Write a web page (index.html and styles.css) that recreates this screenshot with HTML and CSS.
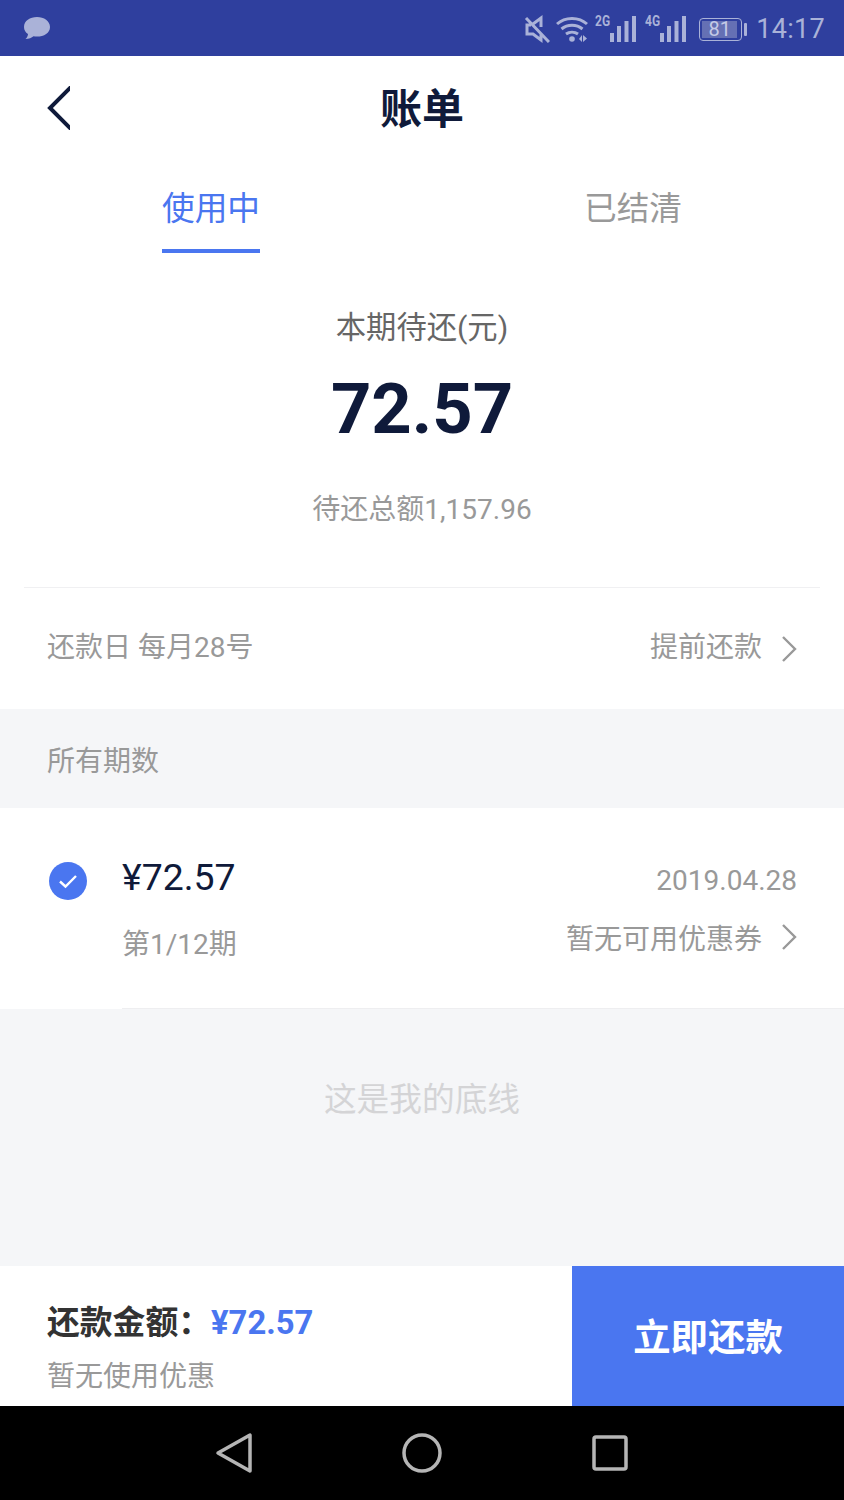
FILE: index.html
```html
<!DOCTYPE html>
<html lang="zh-CN">
<head>
<meta charset="utf-8">
<title>账单</title>
<link rel="stylesheet" href="styles.css">
</head>
<body>
<div class="app">
  <div class="status">
    <svg class="msg" width="30" height="28" viewBox="0 0 30 28"><path d="M15 3C8 3 2 6.800 2 13c0 3 1.500 5.500 4 7-.2 2-1 3.800-2.500 5 3.500 0 6.200-1.200 8-2.700 1.100.2 2.300.3 3.500.3 7 0 13-3.600 13-9.600S22 3 15 3z"/></svg>
    <div class="status-right">
      <svg class="mute" width="26" height="28" viewBox="0 0 26 28"><path class="line" d="M9 9l8-6v9M17 19v6l-8-6H3V10h4M2 3l23 24"/></svg>
      <svg class="wifi" width="32" height="28" viewBox="0 0 32 28"><path class="line" d="M1 9c8-7.500 22-7.500 30 0M5.500 14c6-5 15-5 21 0M10 19c3.500-2.500 8.500-2.500 12 0"/><circle cx="16" cy="24" r="2.800"/><path d="M23 24l3-4v7zM27 20l4 3.500-4 3.500z"/></svg>
      <span class="sig"><span class="gen">2G</span><svg width="28" height="28" viewBox="0 0 28 28"><path d="M1 18h4v9H1zM8 11h4v16H8zM15.500 6h4v21h-4zM23 1h4v26h-4z"/></svg></span>
      <span class="sig sig-last"><span class="gen">4G</span><svg width="28" height="28" viewBox="0 0 28 28"><path d="M1 18h4v9H1zM8 11h4v16H8zM15.500 6h4v21h-4zM23 1h4v26h-4z"/></svg></span>
      <span class="battery"><span class="batt-body"><span class="batt-fill">81</span></span><span class="batt-tip"></span></span>
      <span class="time">14:17</span>
    </div>
  </div>

  <header class="title-bar">
    <svg class="back" width="23" height="44" viewBox="0 0 23 44"><path d="M24 1L3 22l21 21"/></svg>
    <h1>账单</h1>
  </header>

  <nav class="tabs">
    <div class="tab active"><span>使用中</span></div>
    <div class="tab"><span>已结清</span></div>
  </nav>

  <section class="summary">
    <div class="sum-label">本期待还(元)</div>
    <div class="sum-value">72.57</div>
    <div class="sum-total">待还总额1,157.96</div>
  </section>

  <div class="due-row">
    <span class="due-text">还款日 每月28号</span>
    <span class="link"><span class="due-text">提前还款</span><svg class="chev" width="16" height="28" viewBox="0 0 16 28"><path d="M2 2l12 12L2 26"/></svg></span>
  </div>

  <div class="section-head">所有期数</div>

  <div class="bill">
    <div class="check"><svg width="20" height="20" viewBox="0 0 20 20"><path d="M2 10.500l5.500 5L18 5"/></svg></div>
    <div class="bill-main">
      <div class="bill-amt">¥72.57</div>
      <div class="bill-term">第1/12期</div>
    </div>
    <div class="bill-side">
      <div class="bill-date">2019.04.28</div>
      <div class="bill-coupon"><span class="coupon-text">暂无可用优惠券</span><svg class="chev coupon-chev" width="16" height="28" viewBox="0 0 16 28"><path d="M2 2l12 12L2 26"/></svg></div>
    </div>
  </div>

  <div class="rest">这是我的底线</div>

  <footer class="pay">
    <div class="pay-info">
      <div class="pay-amt">还款金额：<em>¥72.57</em></div>
      <div class="pay-note">暂无使用优惠</div>
    </div>
    <div class="pay-btn">立即还款</div>
  </footer>

  <div class="nav">
    <svg width="38" height="42" viewBox="0 0 38 42"><path d="M35 3v36L3 21z"/></svg>
    <svg width="42" height="42" viewBox="0 0 42 42"><circle cx="21" cy="21" r="18"/></svg>
    <svg width="38" height="38" viewBox="0 0 38 38"><rect x="3" y="3" width="32" height="32" rx="2"/></svg>
  </div>
</div>
</body>
</html>
```

FILE: styles.css
```css
* { box-sizing: border-box; }
html, body { margin: 0; padding: 0; }
body { font-family: Roboto, "Noto Sans CJK SC", sans-serif; background: #fff; color: #999; }
.app { width: 844px; height: 1500px; display: flex; flex-direction: column; overflow: hidden; }

.status { height: 56px; flex: none; background: #2f3f9e; display: flex; align-items: center; justify-content: space-between; padding: 0 19px 0 22px; }
.status svg { fill: #aab2d8; display: block; }
.status .line { fill: none; stroke: #aab2d8; stroke-width: 3; }
.status-right { display: flex; align-items: center; padding-top: 2px; }
.mute { margin-right: 6px; }
.wifi { margin-right: 7px; }
.sig { display: flex; align-items: flex-start; margin-right: 8px; }
.sig-last { margin-right: 12px; }
.gen { font-size: 15px; line-height: 14px; font-weight: 700; color: #aab2d8; width: 14px; transform: scaleX(.8); transform-origin: left; margin-top: -1px; }
.battery { display: flex; align-items: center; margin-right: 9px; }
.batt-body { width: 43px; height: 23px; border: 1.500px solid #aab2d8; border-radius: 4px; padding: 2px; display: flex; }
.batt-fill { width: 35px; background: #6570b4; color: #c4cae6; font-size: 20px; line-height: 16px; text-align: center; }
.batt-tip { width: 3px; height: 13px; background: #aab2d8; margin-left: 2px; border-radius: 1px; }
.time { font-size: 27px; line-height: 32px; color: #aab2d8; letter-spacing: .3px; }

.title-bar { height: 104px; flex: none; display: flex; align-items: center; justify-content: center; position: relative; padding-top: 4px; }
.title-bar h1 { margin: 0; font-size: 42px; line-height: 56px; font-weight: 700; color: #0f1a3a; }
.back { position: absolute; left: 47px; top: 30px; fill: none; stroke: #0f1a3a; stroke-width: 4; }

.tabs { height: 93px; flex: none; display: flex; }
.tab { flex: 1; display: flex; justify-content: center; }
.tab span { display: block; height: 93px; padding-top: 26px; font-size: 32.700px; line-height: 46px; color: #999; }
.tab.active span { color: #4a76f0; border-bottom: 4px solid #4a76f0; }

.summary { height: 335px; flex: none; display: flex; flex-direction: column; align-items: center; border-bottom: 1px solid #f0f0f2; margin: 0 24px; }
.sum-label { margin-top: 53px; font-size: 30.300px; line-height: 44px; color: #666; }
.sum-value { margin-top: 17px; font-size: 70.500px; line-height: 84px; font-weight: 700; color: #0f1a3a; }
.sum-total { margin-top: 39px; font-size: 28px; line-height: 40px; color: #999; }

.due-row { height: 121px; flex: none; display: flex; align-items: center; justify-content: space-between; padding: 0 47px; font-size: 28px; color: #999; }
.due-text { position: relative; top: -4px; }
.link { display: flex; align-items: center; }
.chev { fill: none; stroke: #999; stroke-width: 2.400; margin-left: 19px; display: block; }
.coupon-chev { margin-top: -3px; }

.section-head { height: 99px; flex: none; background: #f5f6f8; display: flex; align-items: center; padding-left: 47px; font-size: 28px; color: #999; }

.bill { height: 201px; flex: none; display: flex; position: relative; padding: 0 47px 0 49px; }
.bill::after { content: ""; position: absolute; left: 122px; right: 0; bottom: 0; height: 1px; background: #eeeef0; }
.check { width: 38px; height: 38px; border-radius: 50%; background: #4a76f0; margin-top: 54px; display: flex; align-items: center; justify-content: center; flex: none; }
.check svg { fill: none; stroke: #fff; stroke-width: 2.400; display: block; }
.bill-main { margin-left: 35px; flex: 1; }
.bill-amt { margin-top: 46px; font-size: 37.400px; line-height: 46px; color: #0f1a3a; }
.bill-term { margin-top: 25px; font-size: 28px; line-height: 40px; color: #999; }
.bill-side { display: flex; flex-direction: column; align-items: flex-end; }
.bill-date { margin-top: 53px; font-size: 28px; line-height: 40px; color: #999; }
.bill-coupon { margin-top: 16px; font-size: 28px; line-height: 40px; color: #999; display: flex; align-items: center; }
.coupon-text { padding-top: 3px; }

.rest { flex: 1; background: #f5f6f8; display: flex; justify-content: center; padding-top: 68px; font-size: 32.700px; line-height: 46px; color: #d4d4d6; }

.pay { height: 140px; flex: none; display: flex; background: #fff; }
.pay-info { flex: 1; padding: 35px 0 0 47px; }
.pay-amt { font-size: 32.800px; line-height: 44px; font-weight: 700; color: #333; }
.pay-amt em { font-style: normal; color: #4a76f0; }
.pay-note { margin-top: 12px; font-size: 28px; line-height: 40px; color: #999; }
.pay-btn { width: 272px; background: #4a76f0; color: #fff; font-size: 37.400px; font-weight: 700; display: flex; align-items: center; justify-content: center; padding-bottom: 2px; }

.nav { height: 94px; flex: none; background: #000; display: flex; align-items: center; padding-left: 215px; }
.nav svg { fill: none; stroke: #b5b5b5; stroke-width: 3.500; stroke-linejoin: round; display: block; }
.nav svg:nth-child(1) { margin-right: 148px; }
.nav svg:nth-child(2) { margin-right: 148px; }
```
